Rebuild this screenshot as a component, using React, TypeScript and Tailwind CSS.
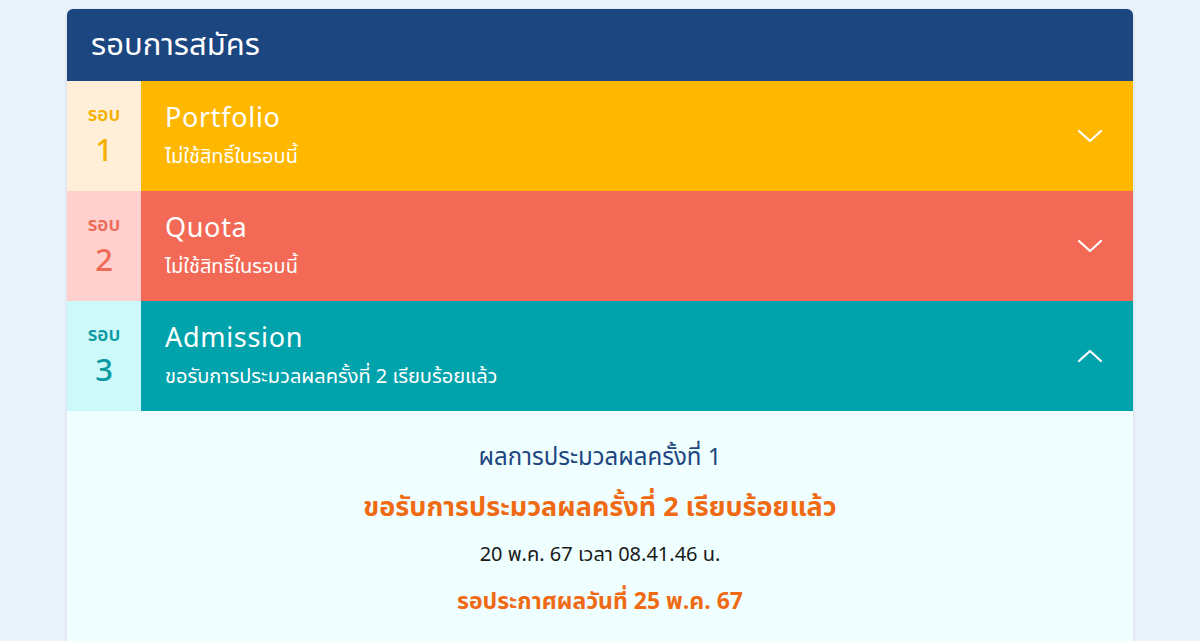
import React from 'react';

type Round = {
  no: number;
  title: string;
  note: string;
  open: boolean;
  side: string;
  main: string;
  label: string;
};

const rounds: Round[] = [
  { no: 1, title: 'Portfolio', note: 'ไม่ใช้สิทธิ์ในรอบนี้', open: false, side: 'bg-[#ffefd8]', main: 'bg-[#ffb700]', label: 'text-[#f5b000]' },
  { no: 2, title: 'Quota', note: 'ไม่ใช้สิทธิ์ในรอบนี้', open: false, side: 'bg-[#ffd0cd]', main: 'bg-[#f26a56]', label: 'text-[#ee6a57]' },
  { no: 3, title: 'Admission', note: 'ขอรับการประมวลผลครั้งที่ 2 เรียบร้อยแล้ว', open: true, side: 'bg-[#cdf9fa]', main: 'bg-[#00a2ab]', label: 'text-[#0a9aa2]' },
];

const Chevron = ({ up }: { up: boolean }) => (
  <svg width="26" height="16" viewBox="0 0 26 16" fill="none" stroke="white" strokeWidth="2.2" strokeLinecap="round" strokeLinejoin="round">
    {up ? <polyline points="2,13 13,3 24,13" /> : <polyline points="2,3 13,13 24,3" />}
  </svg>
);

export default function App() {
  return (
    <div className="min-h-[641px] bg-[#eaf3fc] px-[67px] pt-[9px] font-['Noto_Sans_Thai','Noto_Sans',sans-serif]">
      <div className="rounded-md overflow-hidden bg-[#effefe] shadow-[0_1px_4px_rgba(0,0,0,0.12)]">
        {/* header */}
        <div className="h-[72px] bg-[#1c4680] flex items-center px-6">
          <h1 className="text-white text-[31px] leading-none">รอบการสมัคร</h1>
        </div>

        {rounds.map((r) => (
          <div key={r.no} className="flex h-[110px] last:h-[109px]">
            <div className={`w-[74px] ${r.side} flex flex-col items-center justify-center gap-[10px]`}>
              <span className={`${r.label} text-[19px] font-semibold leading-[22px]`}>รอบ</span>
              <span className={`${r.label} text-[31px] font-medium leading-[30px]`}>{r.no}</span>
            </div>
            <div className={`flex-1 ${r.main} flex items-center pl-6 pr-[30px]`}>
              <div className="flex-1 text-white">
                <div className="text-[27px] leading-[34px] tracking-wide">{r.title}</div>
                <div className="text-[20px] leading-[28px] mt-[7px]">{r.note}</div>
              </div>
              <Chevron up={r.open} />
            </div>
          </div>
        ))}

        {/* detail */}
        <div className="flex flex-col items-center pt-[30px] pb-12 text-center">
          <div className="text-[#1c4680] text-[24px] leading-[34px]">ผลการประมวลผลครั้งที่ 1</div>
          <div className="text-[#f06a14] text-[27px] font-bold leading-[38px] mt-[14px]">ขอรับการประมวลผลครั้งที่ 2 เรียบร้อยแล้ว</div>
          <div className="text-[#1a1a1a] text-[20px] leading-[28px] mt-[14px]">20 พ.ค. 67 เวลา 08.41.46 น.</div>
          <div className="text-[#f06a14] text-[23px] font-bold leading-[34px] mt-[16px]">รอประกาศผลวันที่ 25 พ.ค. 67</div>
        </div>
      </div>
    </div>
  );
}
